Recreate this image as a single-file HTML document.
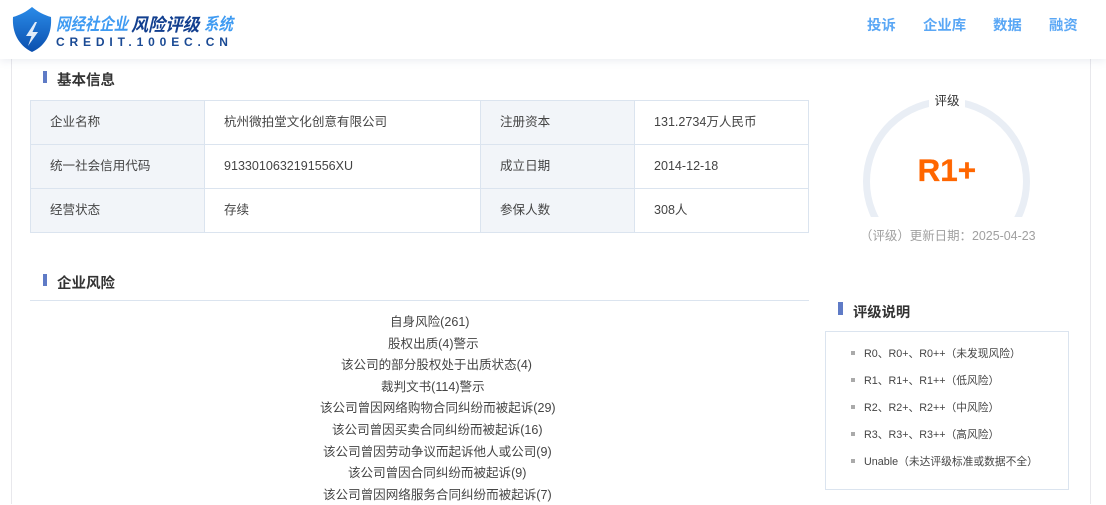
<!DOCTYPE html>
<html lang="zh"><head><meta charset="utf-8"><style>
html,body{margin:0;padding:0;width:1106px;height:504px;overflow:hidden;background:#fff;font-family:"Liberation Sans","Noto Sans CJK SC",sans-serif;color:#333}
.a{position:absolute;white-space:nowrap}
.h{font-size:14.500px;font-weight:700;color:#333;line-height:20px}
.bar{position:absolute;width:4px;background:#5f7bc6}
.c{position:absolute;border:1px solid #dbe4ef;box-sizing:border-box;font-size:12.550px;color:#444;line-height:20px;padding:0 0 2px 19px;display:flex;align-items:center;white-space:nowrap}
.g{background:#f2f5f9}
.r{position:absolute;font-size:12.550px;line-height:20px;color:#444;white-space:nowrap}
.l{position:absolute;left:864px;font-size:10.750px;line-height:16px;color:#444;white-space:nowrap}
.d{position:absolute;left:851px;width:4px;height:4px;background:#aaa}
.n{position:absolute;top:16px;font-size:14.400px;font-weight:700;color:#5aa7f5;line-height:20px;white-space:nowrap}
.t{position:absolute;top:13px;font-size:17px;line-height:24px;font-weight:700;font-style:italic;white-space:nowrap;transform-origin:0 50%;transform:scaleX(.85)}
</style></head><body>
<div class="a" style="left:11px;top:59px;width:1080px;height:445px;border-left:1px solid #e8e8ec;border-right:1px solid #e8e8ec;box-sizing:border-box"></div>
<div class="a" style="left:0;top:0;width:1106px;height:59px;background:#fff;box-shadow:0 2px 8px rgba(90,110,150,.12)"></div>
<svg class="a" style="left:0;top:0" width="60" height="59" viewBox="0 0 60 59"><defs><linearGradient id="s" x1="0" y1="0" x2="0" y2="1"><stop offset="0" stop-color="#2a8be8"/><stop offset="1" stop-color="#0b4fae"/></linearGradient></defs><path d="M32 7C38 12 44 15 51 17C52 32 47 45 32 52C18 45 12 32 13 17C20 15 26 12 32 7Z" fill="url(#s)"/><path d="M35 22L26 36L31.500 36L28 46L38 32L32.500 32L37 22Z" fill="#e3edf9"/></svg>
<div class="t" style="left:56px;color:#3f9bf2">网经社企业</div>
<div class="t" style="left:131px;color:#123f8f;font-size:18px;transform:scaleX(.95)">风险评级</div>
<div class="t" style="left:204px;color:#3f9bf2">系统</div>
<div class="a" style="left:56px;top:35px;font-size:12px;line-height:14px;font-weight:700;letter-spacing:4.850px;color:#1a4a94">CREDIT.100EC.CN</div>
<div class="n" style="left:867px">投诉</div><div class="n" style="left:923px">企业库</div><div class="n" style="left:993px">数据</div><div class="n" style="left:1049px">融资</div>

<div class="bar" style="left:43px;top:71px;height:12px"></div><div class="a h" style="left:57px;top:71px">基本信息</div>
<div class="c g" style="left:30px;top:100px;width:175px;height:45px">企业名称</div>
<div class="c" style="left:204px;top:100px;width:277px;height:45px">杭州微拍堂文化创意有限公司</div>
<div class="c g" style="left:480px;top:100px;width:155px;height:45px">注册资本</div>
<div class="c" style="left:634px;top:100px;width:175px;height:45px">131.2734万人民币</div>
<div class="c g" style="left:30px;top:144px;width:175px;height:45px">统一社会信用代码</div>
<div class="c" style="left:204px;top:144px;width:277px;height:45px">9133010632191556XU</div>
<div class="c g" style="left:480px;top:144px;width:155px;height:45px">成立日期</div>
<div class="c" style="left:634px;top:144px;width:175px;height:45px">2014-12-18</div>
<div class="c g" style="left:30px;top:188px;width:175px;height:45px">经营状态</div>
<div class="c" style="left:204px;top:188px;width:277px;height:45px">存续</div>
<div class="c g" style="left:480px;top:188px;width:155px;height:45px">参保人数</div>
<div class="c" style="left:634px;top:188px;width:175px;height:45px">308人</div>

<svg class="a" style="left:855px;top:90px" width="184" height="127" viewBox="0 0 184 127"><circle cx="91.500" cy="91.500" r="80" fill="none" stroke="#e9eef5" stroke-width="7"/></svg>
<div class="a" style="left:929px;top:92px;width:36px;height:18px;background:#fff;text-align:center;font-size:12.500px;line-height:19px;color:#333">评级</div>
<div class="a" style="left:917.500px;top:152px;font-size:31.500px;line-height:37px;font-weight:700;color:#ff6600;-webkit-text-stroke:.3px #ff6600">R1+</div>
<div class="a" style="left:860px;top:227px;font-size:12.450px;line-height:18px;color:#a0a0a0">（评级）更新日期：2025-04-23</div>

<div class="bar" style="left:43px;top:274px;height:12px"></div><div class="a h" style="left:57px;top:274px">企业风险</div>
<div class="a" style="left:30px;top:300px;width:779px;height:1px;background:#dbe4ef"></div>
<div class="r" style="left:390px;top:312px">自身风险(261)</div>
<div class="r" style="left:388px;top:334px">股权出质(4)警示</div>
<div class="r" style="left:341px;top:355px">该公司的部分股权处于出质状态(4)</div>
<div class="r" style="left:381px;top:377px">裁判文书(114)警示</div>
<div class="r" style="left:320px;top:398px">该公司曾因网络购物合同纠纷而被起诉(29)</div>
<div class="r" style="left:332px;top:420px">该公司曾因买卖合同纠纷而被起诉(16)</div>
<div class="r" style="left:323px;top:442px">该公司曾因劳动争议而起诉他人或公司(9)</div>
<div class="r" style="left:348px;top:463px">该公司曾因合同纠纷而被起诉(9)</div>
<div class="r" style="left:323px;top:485px">该公司曾因网络服务合同纠纷而被起诉(7)</div>

<div class="bar" style="left:838px;top:302px;height:13px;width:5px"></div><div class="a h" style="left:853px;top:303px;font-size:14.300px">评级说明</div>
<div class="a" style="left:825px;top:331px;width:244px;height:159px;border:1px solid #dbe4ef;box-sizing:border-box"></div>
<div class="d" style="top:351px"></div><div class="l" style="top:346px">R0、R0+、R0++（未发现风险）</div>
<div class="d" style="top:378px"></div><div class="l" style="top:373px">R1、R1+、R1++（低风险）</div>
<div class="d" style="top:405px"></div><div class="l" style="top:400px">R2、R2+、R2++（中风险）</div>
<div class="d" style="top:432px"></div><div class="l" style="top:427px">R3、R3+、R3++（高风险）</div>
<div class="d" style="top:459px"></div><div class="l" style="top:454px">Unable（未达评级标准或数据不全）</div>
</body></html>
